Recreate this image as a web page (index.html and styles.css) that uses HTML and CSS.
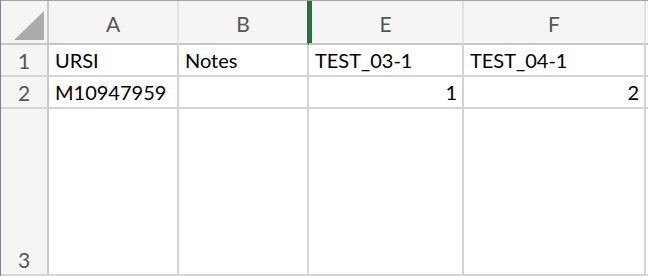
FILE: index.html
```html
<!DOCTYPE html>
<html>
<head>
<meta charset="utf-8">
<link rel="stylesheet" href="styles.css">
</head>
<body>
<div class="sheet">
  <div class="corner"><span class="tri"></span></div>
  <div class="colhead">A</div>
  <div class="colhead sel-left-edge">B</div>
  <div class="colhead sel">E</div>
  <div class="colhead">F</div>
  <div class="colhead tail"></div>

  <div class="rowhead">1</div>
  <div class="cell">URSI</div>
  <div class="cell">Notes</div>
  <div class="cell">TEST_03-1</div>
  <div class="cell">TEST_04-1</div>
  <div class="cell tail"></div>

  <div class="rowhead">2</div>
  <div class="cell">M10947959</div>
  <div class="cell"></div>
  <div class="cell num">1</div>
  <div class="cell num">2</div>
  <div class="cell tail"></div>

  <div class="rowhead">3</div>
  <div class="cell"></div>
  <div class="cell"></div>
  <div class="cell"></div>
  <div class="cell"></div>
  <div class="cell tail"></div>
</div>
</body>
</html>
```

FILE: styles.css
```css
* { box-sizing: border-box; }
html, body { margin: 0; padding: 0; background: #ffffff; }
body {
  width: 648px;
  height: 276px;
  overflow: hidden;
  font-family: Lato, "Open Sans", sans-serif;
}
.sheet {
  display: grid;
  grid-template-columns: 48px 130px 130px 155px 182px 1fr;
  grid-template-rows: 44px 32px 32px 167px;
  border-top: 1px solid #a3a3a3;
  border-left: 1px solid #80838a;
  height: 276px;
}
.corner, .colhead, .rowhead {
  background: #f5f5f5;
  color: #555555;
  font-size: 21px;
}
.corner {
  border-right: 2px solid #c9c9c9;
  border-bottom: 2px solid #c6c6c6;
  position: relative;
}
.tri {
  position: absolute;
  left: 13px;
  top: 10px;
  width: 30px;
  height: 29px;
  background: #ababab;
  clip-path: polygon(100% 0, 100% 100%, 0 100%);
}
.colhead {
  display: flex;
  align-items: center;
  justify-content: center;
  border-right: 2px solid #e2e2e2;
  border-bottom: 2px solid #c6c6c6;
  padding-top: 2px;
}
.colhead.sel-left-edge { border-right-color: #217346; }
.colhead.sel { box-shadow: inset 3px 0 0 #217346; }
.colhead.tail { border-right: none; }
.rowhead {
  display: flex;
  align-items: flex-end;
  justify-content: center;
  border-right: 2px solid #c9c9c9;
  border-bottom: 2px solid #d6d6d6;
  padding-bottom: 2px;
}
.cell {
  display: flex;
  align-items: flex-end;
  border-right: 2px solid #d4d4d4;
  border-bottom: 2px solid #d4d4d4;
  padding: 0 5px 3px 6px;
  font-size: 20px;
  color: #000000;
  white-space: nowrap;
}
.cell.num { justify-content: flex-end; }
.cell.tail { border-right: none; padding: 0; }
```
